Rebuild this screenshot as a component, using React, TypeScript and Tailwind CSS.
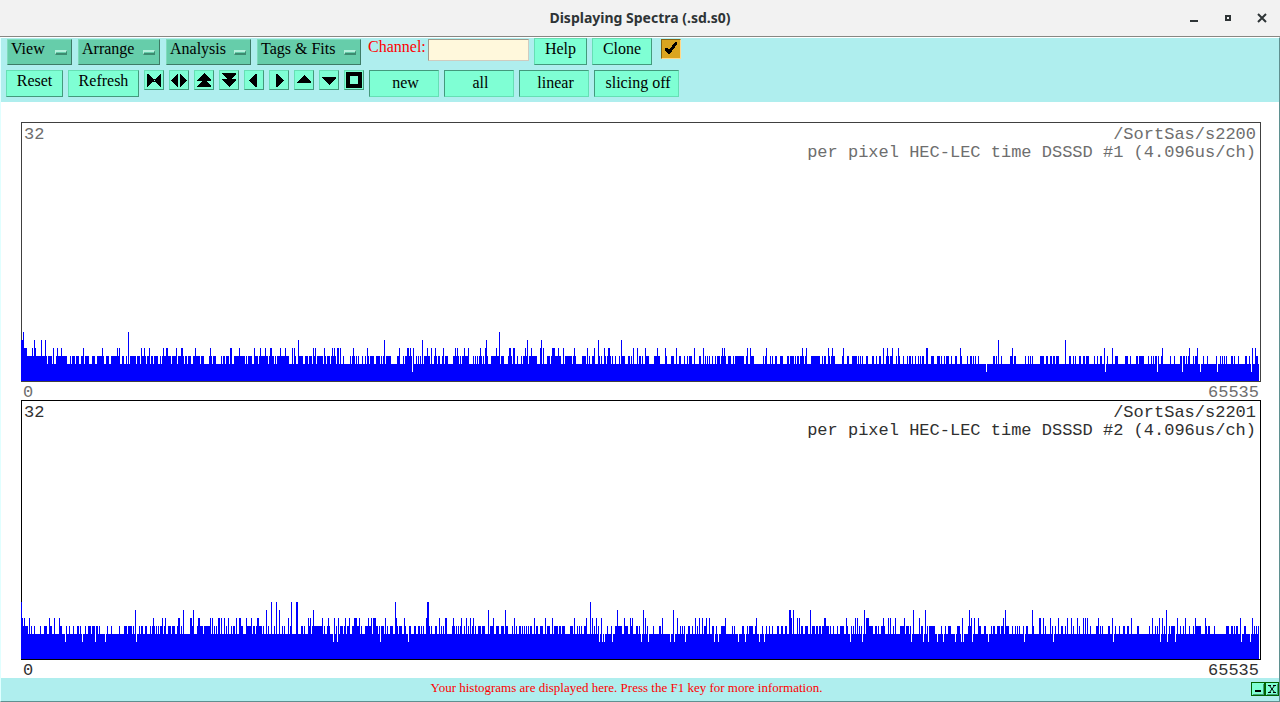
import React from "react";
import clsx from "clsx";

type Spectrum = {
  name: string;
  title: string;
  base: number;
  muted: boolean;
  // columns for each count, written as "x" or "start-end" (end excluded)
  levels: Record<number, string>;
};

const spectra: Spectrum[] = [
  {
    name: "/SortSas/s2200",
    title: "per pixel HEC-LEC time DSSSD #1 (4.096us/ch)",
    base: 2,
    muted: true,
    levels: {
      3: `21-47 48-52 53 56-67 70 72-75 76-79 81-84 85-89 92-95 97-104 106-109 111-120 122-124 126 128
        130-136 137-140 141-146 147-150 151-153 154-158 160 162-171 172-177 178-184 185-187 188-191 193-198
        198-200 201-204 209-212 213-216 221 223-225 226-229 230-232 234-245 246 248-252 254-258 259-264
        264-268 269-274 275 277-289 292 294-296 298-303 305-308 309-312 313-316 317-323 324-326 327-330
        331-334 335 337-339 340 343 350 352-355 356 358 362 365 367-369 370-374 376-380 381 383-385
        386-391 397-400 403 405-412 416 418 420 424-430 434-437 438-440 442-444 445-448 453-459 460
        462-469 473 475 477 479-482 483 485-488 491-500 501-504 508-512 513-515 517 521 523-528 529-537
        540-542 547-550 551-561 565-572 573-576 582-586 589 592-595 598-600 601 604-606 607-611 612 615
        619 621-625 628-630 631 639-641 642 645-649 654-660 665-667 671-674 679-681 684 687 689-692
        699-701 705 707 709 712 715 717-720 721-726 728-731 733 735-744 746-748 750-754 763 765-767
        770 772 775-777 780-783 787-789 790-794 795 797-799 800-804 805-807 811-820 822 824-826 828-830
        831-835 842-844 847-849 852-857 858 860 862 866-868 872-874 876 879-881 886-889 890-893 896
        898-900 903 907 909-911 912 915 918 920 922-924 926-928 931-934 937-940 941 944 946-949 951
        955-957 960-962 967 970-972 973 975 978 993-995 996 1001 1010-1013 1014-1016 1025 1028 1030
        1032 1040-1044 1046-1048 1050-1052 1053-1055 1056-1059 1069-1071 1073 1075 1079-1081 1083-1085
        1086-1089 1094 1097 1100-1102 1107 1112 1115-1118 1125-1128 1130 1136-1138 1139-1144 1148 1151
        1153 1155-1157 1158 1161-1163 1170 1174 1180-1182 1183-1185 1186 1188-1190 1193 1195-1198 1203
        1207 1216 1220 1222 1224 1226 1231-1233 1234 1238 1245-1247 1249 1252 1255-1258`,
      4: `24-27 32 35 41 45 53 57 61 83 102 117 119 141 144 149 163 166-168 176 181-183 195 210 230-232
        239 254 260 265 270-272 280 285 292 294 313 315 324 332 334 337-339 340 353 367 399 407 408 410
        413 427 431 435 443 455 457 464 468 480 485 496 509-511 513-515 525 531 540 543 552-555 558 563
        574 587 594 604 608-610 633 637 645 657 665 676 694 703 722 724 747 750 766 802 806 828 832 843
        883 887 892 898 926-928 960 1012 1104 1112 1162 1189 1197 1252 1255`,
      5: "21-23 34 41 45 298 384 422 486 527 541 598 621 998 1065",
      6: "23 128 499",
      1: "412 986 1105 1157 1182 1200 1217 1251",
    },
  },
  {
    name: "/SortSas/s2201",
    title: "per pixel HEC-LEC time DSSSD #2 (4.096us/ch)",
    base: 3,
    muted: false,
    levels: {
      4: `21-28 31 34 40 44-47 49-52 54 59-62 66 69 73 77-79 80 85 88-91 92-95 96-98 99 107 111 119
        124-127 128-132 133 139 141-143 145-147 150 152-155 156 158 160-163 164-166 168-171 172-175
        177-180 181 190-194 197-203 204-211 212 214 216 218-220 221 226 231 233-235 239-242 242 246-252
        253-255 256-260 260-262 263 268 274 282 284 288 290 301-303 304 308-311 312-323 324 327-330
        336 340-343 344-346 347-350 352-360 361 365-370 370 373-378 379 381-384 385 387 390-393
        396-398 399-402 404-406 409-411 414-416 418-420 421 423 429 431 435-437 441 443 445-447
        452-455 456 458 460 464 468 472-474 475 478-481 482-485 490-494 496-499 501-504 506-508 512
        516 519-521 522 524 526 528 530-532 536-538 540-543 547-550 554-558 559-561 562-565 570-573
        577 579 581 584-587 594 598 607 611 615-622 624-628 630-632 636-638 639 647 653 659-661 680
        682 684 688-690 692 697 704-706 712-714 716 721-724 724-726 732 734 742-744 747 749-753 755
        759 762 766 769 772 777-779 781-783 785-787 801-803 805-808 812-815 816-818 819-821 822-824
        824-829 830 833 837 840-844 847 851 853 859 861 869-873 875-877 878 881-885 893 900-905
        906-909 910 921-923 927 929-935 941 945 948-951 957-960 968-971 978-981 984-986 991 993-995
        997-1000 1001-1003 1006-1009 1012 1015 1017 1019 1023 1026-1028 1033 1045 1052 1055 1061-1063
        1065 1073 1079 1090 1096-1098 1100 1102 1108-1110 1115 1119 1123-1125 1127-1129 1137-1139 1149
        1155 1157 1164 1169 1171-1175 1180 1183 1189 1193 1196-1201 1206 1208-1210 1214 1226-1229
        1231-1233 1234 1236-1238 1244-1246 1254 1256 1258`,
      5: `21-23 24 29 49 54 59 153 162 165 178-180 190-192 198-200 210 212 218-220 221 224 228 236
        239-241 246 251 257-259 288 308 310 322 328 334 338 345 349 354-357 359 368 371 373-376 385
        396 404 426 439 445-447 453 461 466 470 473 493 514 534 545 552 574 586 592 596 601 624 630
        632 645 662 677 695 699 702 706 709 725 756 791 797 799 824-826 846 855 857 866-869 883 888
        890 895 904 919 962 971 974 978 1003 1039-1041 1043 1050 1058 1067 1071 1077 1083 1085 1087
        1098 1112 1131 1152 1159 1162 1177 1185 1195 1205 1240 1252`,
      6: "135 183 193 266 279 313 488 505 617 643 673 789-791 793 810 864 913 925 969 1005 1032 1166",
      7: "21 271 276 291 296-298 395 427-429 590",
      2: `65 82 95 105 136 333 337 380 408 599 602 604 612 641 648 670 674 685 714 718 738 745 759
        764 850 862 911 923 928 937 943 955 961 963 972 988 1024 1053 1113 1160 1167 1175 1241 1250`,
    },
  },
];

const LEFT = 21;
const RIGHT = 1259;

// outline of the filled histogram, one pixel per column and 8 pixels per count
const histogramPath = ({ base, levels }: Spectrum) => {
  const counts: number[] = new Array(RIGHT - LEFT).fill(base);
  const order = Object.keys(levels).map(Number).sort((a, b) => a - b);
  const fill = (level: number) => {
    levels[level].trim().split(/\s+/).forEach((item) => {
      const [start, end] = item.split("-").map(Number);
      for (let x = start; x < (end || start + 1); x++) counts[x - LEFT] = level;
    });
  };
  order.filter((l) => l > base).forEach(fill);
  order.filter((l) => l < base).forEach(fill);
  return `M${LEFT} 259${counts
    .map((count, i) => `V${258 - count * 8}H${LEFT + i + 1}`)
    .join("")}V259Z`;
};

const Plot: React.FC<{ spectrum: Spectrum }> = ({ spectrum }) => (
  <section className={spectrum.muted ? "text-[#6e6e6e]" : "text-[#303030]"}>
    <div
      className={clsx(
        "relative h-[260px] border px-[2px] pt-[3px] flex justify-between items-start",
        spectrum.muted ? "border-[#404040]" : "border-black"
      )}
    >
      <span>32</span>
      <div className="text-right pr-[2px]">
        <h2>{spectrum.name}</h2>
        <p>{spectrum.title}</p>
      </div>
      <svg
        className="absolute -left-px -top-px w-[calc(100%+2px)] max-w-none h-[260px]"
        viewBox="21 0 1240 260"
        preserveAspectRatio="none"
        shapeRendering="crispEdges"
        aria-hidden="true"
      >
        <path d={histogramPath(spectrum)} fill="#0000ff" />
      </svg>
    </div>
    <div className="h-[18px] pt-[2px] flex justify-between px-[2px]">
      <span>0</span>
      <span>65535</span>
    </div>
  </section>
);

const menus = [
  { label: "View", width: "w-[65px]" },
  { label: "Arrange", width: "w-[82px]" },
  { label: "Analysis", width: "w-[85px]" },
  { label: "Tags & Fits", width: "w-[104px]" },
];

const tools = [
  { label: "Compress", d: "M4 4L10 10L4 17H3V4ZM16 4L10 10L16 17H17V4ZM9 9H11V12H9Z" },
  { label: "Expand", d: "M8 4H9V17H8L2 10.5ZM12 4H11V17H12L18 10.5Z" },
  { label: "Double up", d: "M10 3L17 10V11H3V10ZM10 9L17 16V17H3V16ZM8 10H12V12H8Z" },
  { label: "Double down", d: "M3 3H17V4L10 11L3 4ZM3 9H17V10L10 17L3 10ZM8 8H12V10H8Z" },
  { label: "Left", d: "M12 4H13V17H12L5 10.5Z" },
  { label: "Right", d: "M8 4H7V17H8L15 10.5Z" },
  { label: "Up", d: "M10 5L17 12V13H3V12Z" },
  { label: "Down", d: "M3 7H17V8L10 15L3 8Z" },
  { label: "Full view", d: "M2 2H18V18H2ZM6 6V14H14V6Z" },
];

const modes = [
  { label: "new", width: "w-[70px]" },
  { label: "all", width: "w-[70px]" },
  { label: "linear", width: "w-[70px]" },
  { label: "slicing off", width: "w-[85px]" },
];

const raised =
  "border border-t-[#66dfb4] border-l-[#66dfb4] border-r-[#439a7c] border-b-[#439a7c] bg-[#7fffd4]";

const App: React.FC = () => {
  return (
    <div className="w-full bg-white text-black font-['Liberation_Serif',serif] text-base leading-5">
      <header className="relative h-[37px] bg-[#f2f2f2] border-b border-[#878783] flex items-center justify-center font-['Noto_Sans',sans-serif] text-[14px] font-bold text-[#2e3436]">
        <h1>Displaying Spectra (.sd.s0)</h1>
        <div className="absolute right-[11px] top-2 flex gap-[14px]">
          <button aria-label="Minimize" className="w-5 h-5">
            <svg viewBox="0 0 20 20" shapeRendering="crispEdges">
              <path d="M6 12H14V14H6Z" fill="#2e3436" />
            </svg>
          </button>
          <button aria-label="Maximize" className="w-5 h-5">
            <svg viewBox="0 0 20 20" shapeRendering="crispEdges">
              <path d="M8 8H12V12H8Z" fill="none" stroke="#2e3436" strokeWidth="2" />
            </svg>
          </button>
          <button aria-label="Close window" className="w-5 h-5 -mr-[3px]">
            <svg viewBox="0 0 20 20">
              <path d="M6 6L14 14M14 6L6 14" fill="none" stroke="#2e3436" strokeWidth="2" />
            </svg>
          </button>
        </div>
      </header>

      <div className="border-t border-t-white border-l border-l-[#e0ffff] border-r border-r-[#5f9090] border-b border-b-[#5f9090]">
        <div className="bg-[#afeeee] h-16 pl-[5px]">
          <div className="flex items-start gap-[5px] h-8">
            <nav className="flex gap-[6px] pt-px pl-px">
              {menus.map((menu) => (
                <button
                  key={menu.label}
                  aria-haspopup="menu"
                  className={clsx(
                    "h-[26px] pl-[3px] pr-1 pb-[6px] flex items-center justify-between border border-t-[#7fdcbb] border-l-[#7fdcbb] border-r-[#3d7b66] border-b-[#3d7b66] bg-[#66cdaa] whitespace-nowrap",
                    menu.width
                  )}
                >
                  {menu.label}
                  <span className="w-3 h-[5px] mt-[7px] border border-t-2 border-b-2 border-t-[#b5f0dc] border-l-[#b5f0dc] border-r-[#3d8b70] border-b-[#3d8b70]" />
                </button>
              ))}
            </nav>
            <div className="flex items-start gap-[3px]">
              <label htmlFor="channel" className="w-[59px] pl-[2px] leading-[18px] text-[#ff0000]">
                Channel:
              </label>
              <input
                id="channel"
                type="text"
                className="mt-px w-[101px] h-[22px] px-1 bg-[#fff8dc] border-t-[#9e9a8b] border-l-[#9e9a8b] border-r-[#d0ccc0] border-b-[#d0ccc0] border"
              />
            </div>
            <button className={clsx(raised, "w-[53px] h-[27px] pb-[6px]")}>Help</button>
            <button className={clsx(raised, "w-[60px] h-[27px] pb-[6px]")}>Clone</button>
            <label className="relative w-5 h-5 ml-1 mt-px">
              <input
                type="checkbox"
                defaultChecked
                aria-label="Toolbar option"
                className="peer block appearance-none w-5 h-5 bg-[#daa520] border border-t-[#836313] border-l-[#836313] border-r-[#ffd98a] border-b-[#ffd98a]"
              />
              <svg
                className="absolute inset-0 hidden peer-checked:block pointer-events-none"
                viewBox="0 0 20 20"
                shapeRendering="crispEdges"
              >
                <path d="M4 9H6L8 11L14 3H16V5L9 15H7L4 11Z" />
              </svg>
            </label>
          </div>

          <div className="flex items-start gap-[5px]">
            <button className={clsx(raised, "w-[57px] h-[27px] pb-[6px]")}>Reset</button>
            <button className={clsx(raised, "w-[71px] h-[27px] pb-[6px]")}>Refresh</button>
            {tools.map((tool) => (
              <button key={tool.label} aria-label={tool.label} className={clsx(raised, "w-5 h-5")}>
                <svg
                  className="-m-px w-5 max-w-none h-5"
                  viewBox="0 0 20 20"
                  shapeRendering="crispEdges"
                >
                  <path d={tool.d} fillRule={tool.label === "Full view" ? "evenodd" : "nonzero"} />
                </svg>
              </button>
            ))}
            {modes.map((mode) => (
              <button
                key={mode.label}
                className={clsx(
                  "h-[27px] pl-[3px] pb-[2px] border border-t-[#439a7c] border-l-[#439a7c] border-r-[#66dfb4] border-b-[#66dfb4] bg-[#7fffd4]",
                  mode.width
                )}
              >
                {mode.label}
              </button>
            ))}
          </div>
        </div>

        <main className="bg-white pl-5 pr-[18px] pt-5 font-['Liberation_Mono',monospace] text-[17px] leading-[18px]">
          {spectra.map((spectrum) => (
            <Plot key={spectrum.name} spectrum={spectrum} />
          ))}
        </main>

        <footer className="relative bg-[#afeeee] h-[23px] pr-[27px] text-center text-[13px] text-[#ff0000]">
          <p>Your histograms are displayed here. Press the F1 key for more information.</p>
          <div className="absolute right-0 top-1 flex">
            <button aria-label="Hide" className="w-[14px] h-[14px] bg-[#7fffd4] border border-[#006400]">
              <svg
                className="-m-px w-[14px] max-w-none h-[14px]"
                viewBox="0 0 14 14"
                shapeRendering="crispEdges"
              >
                <path d="M0.5 0.5H13.5V13.5H0.5Z" fill="none" stroke="#006400" />
                <path d="M12.5 2V12.5H2" fill="none" stroke="#439a7c" />
                <path d="M4 8H10V10H4Z" />
              </svg>
            </button>
            <button aria-label="Close" className="w-[14px] h-[14px] bg-[#7fffd4] border border-[#006400]">
              <svg
                className="-m-px w-[14px] max-w-none h-[14px]"
                viewBox="0 0 14 14"
              >
                <path d="M12.5 2V12.5H2" fill="none" stroke="#439a7c" />
                <path
                  d="M3 3.5H6M8 3.5H11M3 10.5H6M8 10.5H11M4 3L10 11M10 3L4 11"
                  fill="none"
                  stroke="#000"
                />
              </svg>
            </button>
          </div>
        </footer>
      </div>
    </div>
  );
};

export default App;
